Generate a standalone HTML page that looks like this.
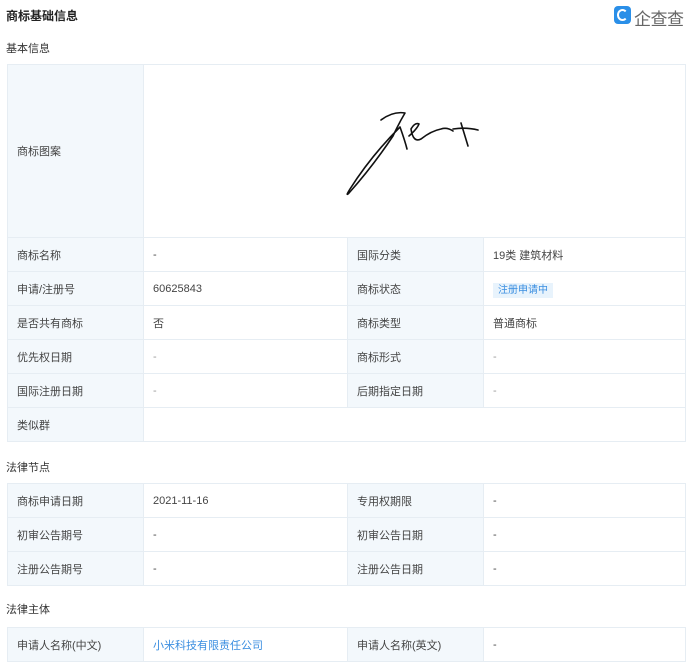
<!DOCTYPE html>
<html><head><meta charset="utf-8"><style>
*{margin:0;padding:0;box-sizing:border-box}
body{width:690px;height:657px;background:#fff;font-family:"Liberation Sans","Noto Sans CJK SC",sans-serif;font-size:11px;color:#444;position:relative;overflow:hidden}
.abs{position:absolute}
table{position:absolute;left:7px;width:678px;border-collapse:collapse;table-layout:fixed}
td{border:1px solid #e6edf3;height:34px;padding:0 0 0 9px;vertical-align:middle;font-size:11px;color:#444}
td.l{background:#f3f8fc}
.tag{background:#e8f3fc;color:#3a8ee0;padding:2px 5px;font-size:10px}
a{color:#3a8ee0;text-decoration:none}
.sec{position:absolute;left:6px;font-size:11px;color:#333}
</style></head><body>
<div class="abs" style="left:6px;top:7px;font-size:12px;font-weight:bold;color:#222">商标基础信息</div>
<div class="abs" style="left:614px;top:6px;width:17px;height:18px;background:#2a8fe8;border-radius:4px"></div>
<div class="abs" style="left:617px;top:9px;width:11px;height:12px;border:2px solid #fff;border-radius:50%;border-right-color:transparent"></div>
<div class="abs" style="left:634px;top:5px;font-size:17px;color:#666;letter-spacing:-0.5px">企查查</div>
<div class="sec" style="top:40px">基本信息</div>
<table style="top:64px">
<colgroup><col style="width:136px"><col style="width:204px"><col style="width:136px"><col style="width:202px"></colgroup>
<tr><td class="l" style="height:173px">商标图案</td><td colspan="3" style="position:relative;padding:0">
<svg width="535" height="173" style="position:absolute;left:0;top:0"><g transform="translate(-143,-64)" fill="none" stroke="#111" stroke-width="1.6" stroke-linecap="round" stroke-linejoin="round">
<path d="M380 119 Q392 110 404 112 Q398 122 392 135 Q372 165 348 192 Q344 196 349 188 Q370 155 399 126 Q404 140 406 148"/>
<path d="M408 135 Q416 128 418 123 Q414 121 410 128 Q412 142 420 138 Q430 130 440 128 Q446 126 452 130"/>
<path d="M452 128 Q465 126 477 129"/>
<path d="M460 122 Q463 132 467 145"/>
</g></svg></td></tr>
<tr><td class="l">商标名称</td><td>-</td><td class="l">国际分类</td><td>19类 建筑材料</td></tr>
<tr><td class="l">申请/注册号</td><td>60625843</td><td class="l">商标状态</td><td><span class="tag">注册申请中</span></td></tr>
<tr><td class="l">是否共有商标</td><td>否</td><td class="l">商标类型</td><td>普通商标</td></tr>
<tr><td class="l">优先权日期</td><td style="color:#999">-</td><td class="l">商标形式</td><td style="color:#999">-</td></tr>
<tr><td class="l">国际注册日期</td><td style="color:#999">-</td><td class="l">后期指定日期</td><td style="color:#999">-</td></tr>
<tr><td class="l">类似群</td><td colspan="3"></td></tr>
</table>
<div class="sec" style="top:459px">法律节点</div>
<table style="top:483px">
<colgroup><col style="width:136px"><col style="width:204px"><col style="width:136px"><col style="width:202px"></colgroup>
<tr><td class="l">商标申请日期</td><td>2021-11-16</td><td class="l">专用权期限</td><td>-</td></tr>
<tr><td class="l">初审公告期号</td><td>-</td><td class="l">初审公告日期</td><td>-</td></tr>
<tr><td class="l">注册公告期号</td><td>-</td><td class="l">注册公告日期</td><td>-</td></tr>
</table>
<div class="sec" style="top:601px">法律主体</div>
<table style="top:627px">
<colgroup><col style="width:136px"><col style="width:204px"><col style="width:136px"><col style="width:202px"></colgroup>
<tr><td class="l">申请人名称(中文)</td><td><a>小米科技有限责任公司</a></td><td class="l">申请人名称(英文)</td><td>-</td></tr>
</table>
</body></html>
